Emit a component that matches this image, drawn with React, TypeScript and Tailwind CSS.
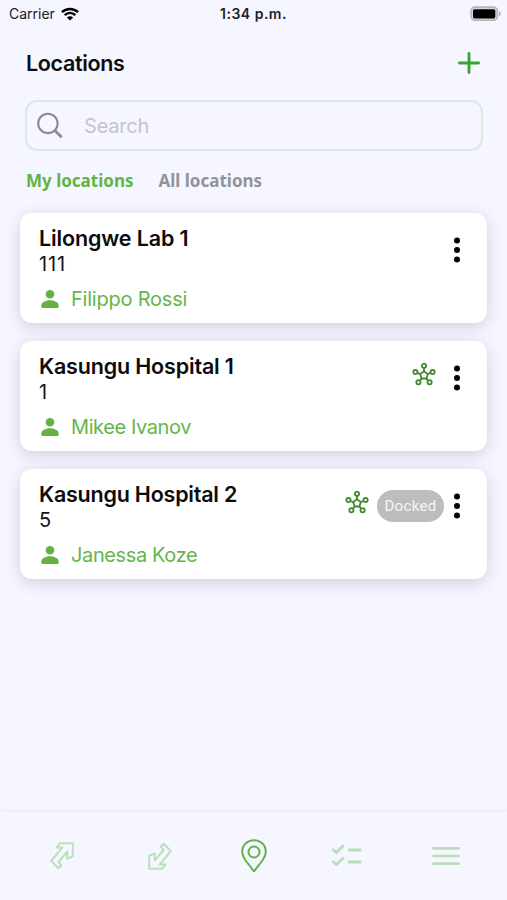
import React from "react";

type Location = {
  name: string;
  code: string;
  owner: string;
  hub?: boolean;
  docked?: boolean;
  nameClass: string;
  codeClass: string;
  ownerClass: string;
};

const locations: Location[] = [
  { name: "Lilongwe Lab 1", code: "111", owner: "Filippo Rossi", nameClass: "tracking-[-0.14px]", codeClass: "tracking-[0.9px]", ownerClass: "tracking-[-0.22px]" },
  { name: "Kasungu Hospital 1", code: "1", owner: "Mikee Ivanov", hub: true, nameClass: "tracking-[-0.17px]", codeClass: "tracking-normal", ownerClass: "tracking-[-0.4px]" },
  { name: "Kasungu Hospital 2", code: "5", owner: "Janessa Koze", hub: true, docked: true, nameClass: "tracking-[-0.22px]", codeClass: "tracking-normal", ownerClass: "tracking-[-0.38px]" },
];

function WifiIcon() {
  return (
    <svg width="18" height="14" viewBox="0 0 18 14" fill="none" stroke="#000" strokeWidth="2.5">
      <path d="M0.9 5.2C5.5 0.8 12.5 0.8 17.1 5.2" />
      <path d="M3.7 8.1C6.8 5.2 11.2 5.2 14.3 8.1" />
      <path d="M9 13.6L5.9 10.4C7.6 8.8 10.4 8.8 12.1 10.4Z" fill="#000" stroke="none" />
    </svg>
  );
}

function BatteryIcon() {
  return (
    <svg width="32" height="16" viewBox="0 0 32 16">
      <rect x="1" y="1.1" width="26.4" height="13.2" rx="4" fill="#d8d8de" stroke="#b5b5b9" strokeWidth="1.6" />
      <rect x="3" y="3.2" width="22.3" height="9.2" rx="1.6" fill="#000" />
      <path d="M29 5.2C31.4 6.2 31.4 9.2 29 10.2Z" fill="#b2b2b6" />
    </svg>
  );
}

function HubIcon() {
  return (
    <svg width="24" height="24" viewBox="0 0 24 24" fill="none" stroke="#42882e" strokeWidth="1.8">
      <path d="M12 8.2L15.8 11L14.4 15.5H9.6L8.2 11Z" />
      <path d="M12 8.2V5M15.8 11L18.2 10.2M14.4 15.5L16 17.6M9.6 15.5L8 17.6M8.2 11L5.8 10.2" />
      <circle cx="12" cy="2.8" r="2.1" />
      <circle cx="20.6" cy="9.1" r="2.1" />
      <circle cx="17.6" cy="19.2" r="2.1" />
      <circle cx="6.4" cy="19.2" r="2.1" />
      <circle cx="3.4" cy="9.1" r="2.1" />
    </svg>
  );
}

function PersonIcon() {
  return (
    <svg width="18" height="20" viewBox="0 0 18 20" fill="#65b146">
      <circle cx="9" cy="5.2" r="4.3" />
      <path d="M0.3 17.6V16.6C0.3 13.6 4.3 11.2 9 11.2S17.7 13.6 17.7 16.6V17.6Q17.7 19 16.3 19H1.7Q0.3 19 0.3 17.6Z" />
    </svg>
  );
}

function MoreIcon() {
  return (
    <svg width="8" height="26" viewBox="0 0 8 26" fill="#000">
      <circle cx="4" cy="3.5" r="3" />
      <circle cx="4" cy="13" r="3" />
      <circle cx="4" cy="22.5" r="3" />
    </svg>
  );
}

function ArrowIcon({ down = false }: { down?: boolean }) {
  return (
    <svg
      width="24"
      height="28"
      viewBox="0 0 24 28"
      fill="none"
      stroke="#bedfbb"
      strokeWidth="2"
      strokeLinejoin="round"
      className={down ? "rotate-180" : ""}
    >
      <path d="M22.8 1.3H9.8L6.5 5.4H12.3L1.2 19L8.4 26.3L11.3 23.4L8.5 20L17.3 9.5V16.7L22.8 14.3Z" />
    </svg>
  );
}

function LocationCard({ location }: { location: Location }) {
  return (
    <article className="flex h-[110px] justify-between rounded-[12px] bg-white pl-[19px] pr-[26px] shadow-[0_4px_16px_rgba(30,30,60,0.17)]">
      <div className="pt-[11px]">
        <h2 className={"whitespace-nowrap text-[21.5px] font-semibold leading-[28px] text-[#0c0c0c] " + location.nameClass}>
          {location.name}
        </h2>
        <p className={"text-[20px] leading-[24px] text-[#151515] " + location.codeClass}>{location.code}</p>
        <div className="mt-[11px] flex items-center gap-3 pl-[2px]">
          <PersonIcon />
          <span className={"whitespace-nowrap text-[20px] leading-[24px] text-[#65b64b] " + location.ownerClass}>{location.owner}</span>
        </div>
      </div>
      <div className="flex h-[73px] items-center">
        {location.hub && (
          <div className={location.docked ? "mr-2 -mt-[5px]" : "mr-[17px] -mt-[5px]"}>
            <HubIcon />
          </div>
        )}
        {location.docked && (
          <span className="mr-[9px] flex h-8 w-[67px] items-center justify-center rounded-full bg-[#bdbdbd] font-[Roboto] text-[15px] tracking-[0.35px] text-[#f5f5f5]">
            Docked
          </span>
        )}
        <MoreIcon />
      </div>
    </article>
  );
}

export default function App() {
  return (
    <div className="flex h-[900px] w-[507px] flex-col overflow-hidden bg-[#f5f6ff] font-[Inter,sans-serif]">
      <div className="grid h-[27px] shrink-0 grid-cols-3 items-center pl-[9px] pr-[5px] text-[14px] text-[#202022]">
        <div className="flex items-center gap-[6px]">
          <span>Carrier</span>
          <WifiIcon />
        </div>
        <span className="whitespace-nowrap pr-[4px] text-center font-semibold tracking-[0.5px]">1:34 p.m.</span>
        <div className="flex justify-end"><BatteryIcon /></div>
      </div>

      <header className="flex h-[72px] shrink-0 items-center justify-between pl-[26px] pr-[27px]">
        <h1 className="text-[21.5px] font-semibold tracking-[-0.35px] text-[#0c0c0c]">Locations</h1>
        <svg width="22" height="22" viewBox="0 0 22 22" stroke="#35a52d" strokeWidth="2.8" strokeLinecap="round">
          <path d="M11 1.4V20.6M1.4 11H20.6" />
        </svg>
      </header>

      <div className="ml-[25px] mr-6 mt-px flex h-[51px] shrink-0 items-center rounded-[12px] border-2 border-[#d8ebdc] pl-[10px]">
        <svg width="26" height="27" viewBox="0 0 26 27" fill="none" stroke="#8b8b90" strokeWidth="2.1">
          <circle cx="10.9" cy="11.4" r="9.7" />
          <path d="M17.8 18.4L24.7 25.3" strokeWidth="2.8" />
        </svg>
        <span className="pl-[21px] pt-px text-[20px] tracking-[-0.2px] text-[#c3c4cf]">Search</span>
      </div>

      <div className="flex h-[60px] shrink-0 items-center gap-[25px] pl-[26px] font-['Noto_Sans',sans-serif] text-[17px] font-bold">
        <span className="text-[#61b446]">My locations</span>
        <span className="text-[#929297]">All locations</span>
      </div>

      <main className="mt-[2px] flex grow flex-col gap-[18.2px] px-5">
        {locations.map((location) => (
          <LocationCard key={location.name} location={location} />
        ))}
      </main>

      <nav className="flex h-[88px] shrink-0 items-center justify-between pl-[50px] pr-[47px] shadow-[0_-2px_3px_rgba(80,80,120,0.05)]">
        <ArrowIcon />
        <div className="ml-[8px] mr-[2px]"><ArrowIcon down /></div>
        <svg className="mr-[1px]" width="26" height="34" viewBox="0 0 26 34" fill="none" stroke="#65b14b" strokeWidth="2">
          <path d="M13 32.3L4.2 21C2.3 18.3 1.2 16 1.2 12.8C1.2 6.2 6.3 1.2 13 1.2S24.8 6.2 24.8 12.8C24.8 16 23.7 18.3 21.8 21Z" strokeLinejoin="round" />
          <circle cx="13" cy="13" r="5.5" />
        </svg>
        <svg className="-ml-[3px] mr-[3px] mb-[2px]" width="32" height="24" viewBox="0 0 32 24" fill="none" stroke="#bbddb9" strokeWidth="2.8">
          <path d="M1.4 6L5.4 9.6L12.8 2.2M1.4 18L5.4 21.6L12.8 14.2M17 7H30.4M17 19H30.4" />
        </svg>
        <svg width="28" height="20" viewBox="0 0 28 20" stroke="#bbddb9" strokeWidth="2.7" strokeLinecap="round">
          <path d="M1.4 2.4H26.6M1.4 10H26.6M1.4 17.6H26.6" />
        </svg>
      </nav>
    </div>
  );
}
